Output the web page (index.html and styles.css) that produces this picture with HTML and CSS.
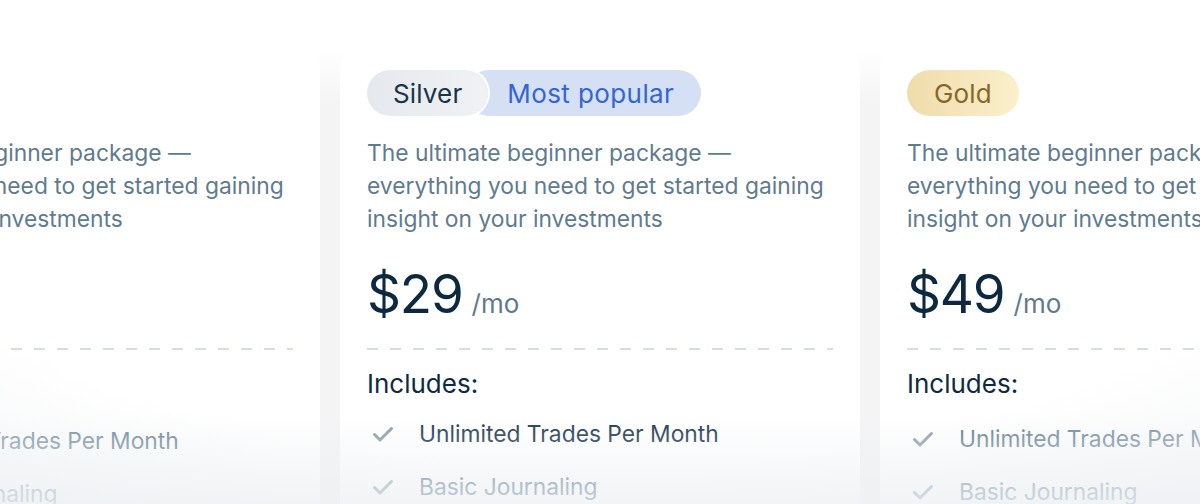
FILE: index.html
```html
<!DOCTYPE html>
<html lang="en">
<head>
<meta charset="utf-8">
<title>Pricing</title>
<link rel="stylesheet" href="styles.css">
</head>
<body>
<section class="pricing">
  <div class="track">
    <article class="card card--left">
      <div class="badges"><span class="badge badge--bronze">Bronze</span></div>
      <p class="desc">The ultimate beginner package — everything you need to get started gaining insight on your investments</p>
      <div class="price"><span class="amount">$19</span><span class="per">/mo</span></div>
      <hr class="rule">
      <h3 class="includes">Includes:</h3>
      <ul class="features">
        <li><svg class="check" viewBox="0 0 22 18"><path d="M2.5 9.5 L8 15 L19.5 3.5"/></svg>Unlimited Trades Per Month</li>
        <li><svg class="check" viewBox="0 0 22 18"><path d="M2.5 9.5 L8 15 L19.5 3.5"/></svg>Basic Journaling</li>
      </ul>
    </article>
    <article class="card card--featured">
      <div class="badges">
        <span class="badge badge--silver">Silver</span>
        <span class="badge badge--popular">Most popular</span>
      </div>
      <p class="desc">The ultimate beginner package — everything you need to get started gaining insight on your investments</p>
      <div class="price"><span class="amount">$29</span><span class="per">/mo</span></div>
      <hr class="rule">
      <h3 class="includes">Includes:</h3>
      <ul class="features">
        <li><svg class="check" viewBox="0 0 22 18"><path d="M2.5 9.5 L8 15 L19.5 3.5"/></svg>Unlimited Trades Per Month</li>
        <li><svg class="check" viewBox="0 0 22 18"><path d="M2.5 9.5 L8 15 L19.5 3.5"/></svg>Basic Journaling</li>
      </ul>
    </article>
    <article class="card card--right">
      <div class="badges"><span class="badge badge--gold">Gold</span></div>
      <p class="desc">The ultimate beginner package — everything you need to get started gaining insight on your investments</p>
      <div class="price"><span class="amount">$49</span><span class="per">/mo</span></div>
      <hr class="rule">
      <h3 class="includes">Includes:</h3>
      <ul class="features">
        <li><svg class="check" viewBox="0 0 22 18"><path d="M2.5 9.5 L8 15 L19.5 3.5"/></svg>Unlimited Trades Per Month</li>
        <li><svg class="check" viewBox="0 0 22 18"><path d="M2.5 9.5 L8 15 L19.5 3.5"/></svg>Basic Journaling</li>
      </ul>
    </article>
  </div>
  <div class="fade"></div>
</section>
</body>
</html>
```
FILE: styles.css
```css
* { box-sizing: border-box; }
html, body {
  margin: 0;
  padding: 0;
  width: 1200px;
  height: 504px;
  overflow: hidden;
}
body {
  font-family: "Inter", "Noto Sans", sans-serif;
  background: linear-gradient(to bottom, #ffffff 50px, #f4f4f5 105px);
}
.pricing {
  position: relative;
  width: 1200px;
  height: 504px;
  overflow: hidden;
}
.track {
  display: flex;
  gap: 20px;
  margin-left: -200px;
  padding-top: 43px;
}
.card {
  flex: none;
  width: 520px;
  height: 500px;
  background: #ffffff;
  border-radius: 24px 24px 0 0;
  padding: 27px 27px 0 27px;
}
.badges {
  display: flex;
  height: 46px;
}
.badge {
  display: inline-flex;
  align-items: center;
  height: 46px;
  border-radius: 23px;
  font-size: 26px;
  letter-spacing: 0.15px;
  padding: 0 26px;
}
.badge--silver {
  position: relative;
  z-index: 1;
  background: linear-gradient(90deg, #e5e9ed, #f0f2f5);
  color: #1a3447;
  box-shadow: 0 0 0 2px #ffffff;
}
.badge--popular {
  margin-left: -22px;
  padding-left: 41px;
  padding-right: 27px;
  background: #d5e0f4;
  color: #3466d0;
  letter-spacing: 0.4px;
}
.badge--gold {
  background: linear-gradient(90deg, #efdcab, #fbf0cb);
  color: #86672a;
  padding: 0 27px;
}
.badge--bronze {
  background: linear-gradient(90deg, #edd2bf, #f7e5d8);
  color: #80512f;
}
.desc {
  margin: 20px 0 0 0;
  font-size: 22.8px;
  line-height: 33px;
  color: #5e7b90;
}
.price {
  display: flex;
  align-items: baseline;
  margin-top: 27px;
  height: 76px;
}
.amount {
  font-size: 53px;
  color: #0c2940;
  letter-spacing: -1.2px;
}
.per {
  margin-left: 9px;
  font-size: 26px;
  color: #62798b;
}
.rule {
  border: 0;
  height: 2px;
  margin: 10px 0 0 0;
  background: repeating-linear-gradient(to right, #d6dce2 0 11px, transparent 11px 23px);
}
.includes {
  margin: 18px 0 0 0;
  font-weight: 400;
  font-size: 26px;
  line-height: 32px;
  color: #0e2a40;
}
.features {
  list-style: none;
  margin: 7px 0 0 0;
  padding: 0;
}
.features li {
  display: flex;
  align-items: center;
  gap: 25px;
  height: 53px;
  font-size: 22.8px;
  color: #5b7a90;
}
.card--featured .features li:first-child { color: #1b384f; }
.card--right .features { margin-top: 12px; }
.card--left .features { margin-top: 14px; }
.check {
  flex: none;
  width: 22px;
  height: 18px;
  margin-left: 5px;
  fill: none;
  stroke: #8c9cab;
  stroke-width: 3;
  stroke-linecap: round;
  stroke-linejoin: round;
}
.fade {
  position: absolute;
  inset: 0;
  pointer-events: none;
  background:
    linear-gradient(to bottom, rgba(237, 240, 243, 0) 82%, rgba(237, 240, 243, 0.68) 100%),
    radial-gradient(ellipse 90% 115% at 50% 0%, rgba(237, 240, 243, 0) 80%, rgba(237, 240, 243, 0.5) 100%);
}
```
